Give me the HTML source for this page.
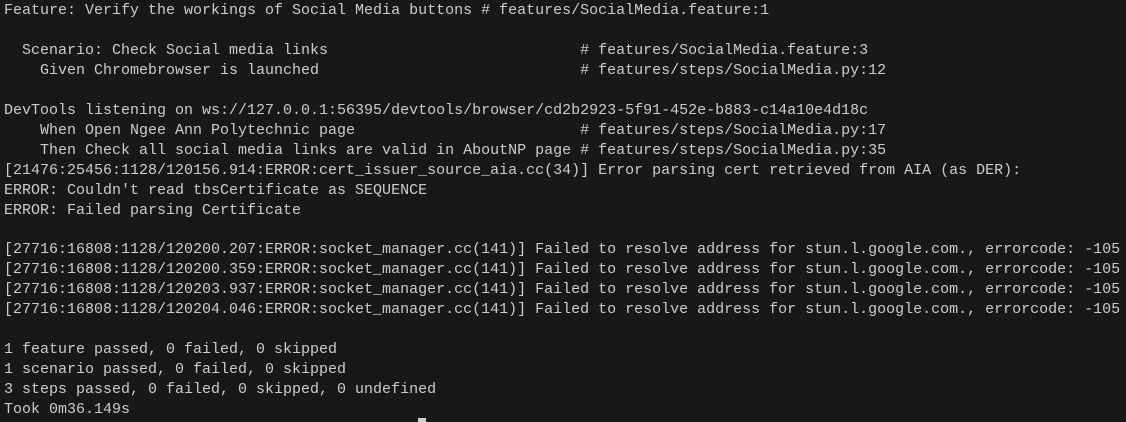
<!DOCTYPE html>
<html><head><style>
html,body{margin:0;padding:0;background:#181818;width:1126px;height:422px;overflow:hidden}
pre{position:absolute;left:4px;top:1px;margin:0;font-family:"Liberation Mono",monospace;font-size:15px;line-height:19.95px;color:#cccccc;white-space:pre}
.cur{position:absolute;left:418px;top:418px;width:8px;height:4px;background:#cccccc}
</style></head><body>
<pre>Feature: Verify the workings of Social Media buttons # features/SocialMedia.feature:1

  Scenario: Check Social media links                            # features/SocialMedia.feature:3
    Given Chromebrowser is launched                             # features/steps/SocialMedia.py:12

DevTools listening on ws://127.0.0.1:56395/devtools/browser/cd2b2923-5f91-452e-b883-c14a10e4d18c
    When Open Ngee Ann Polytechnic page                         # features/steps/SocialMedia.py:17
    Then Check all social media links are valid in AboutNP page # features/steps/SocialMedia.py:35
[21476:25456:1128/120156.914:ERROR:cert_issuer_source_aia.cc(34)] Error parsing cert retrieved from AIA (as DER):
ERROR: Couldn't read tbsCertificate as SEQUENCE
ERROR: Failed parsing Certificate

[27716:16808:1128/120200.207:ERROR:socket_manager.cc(141)] Failed to resolve address for stun.l.google.com., errorcode: -105
[27716:16808:1128/120200.359:ERROR:socket_manager.cc(141)] Failed to resolve address for stun.l.google.com., errorcode: -105
[27716:16808:1128/120203.937:ERROR:socket_manager.cc(141)] Failed to resolve address for stun.l.google.com., errorcode: -105
[27716:16808:1128/120204.046:ERROR:socket_manager.cc(141)] Failed to resolve address for stun.l.google.com., errorcode: -105

1 feature passed, 0 failed, 0 skipped
1 scenario passed, 0 failed, 0 skipped
3 steps passed, 0 failed, 0 skipped, 0 undefined
Took 0m36.149s
</pre>
<div class="cur"></div>
</body></html>
